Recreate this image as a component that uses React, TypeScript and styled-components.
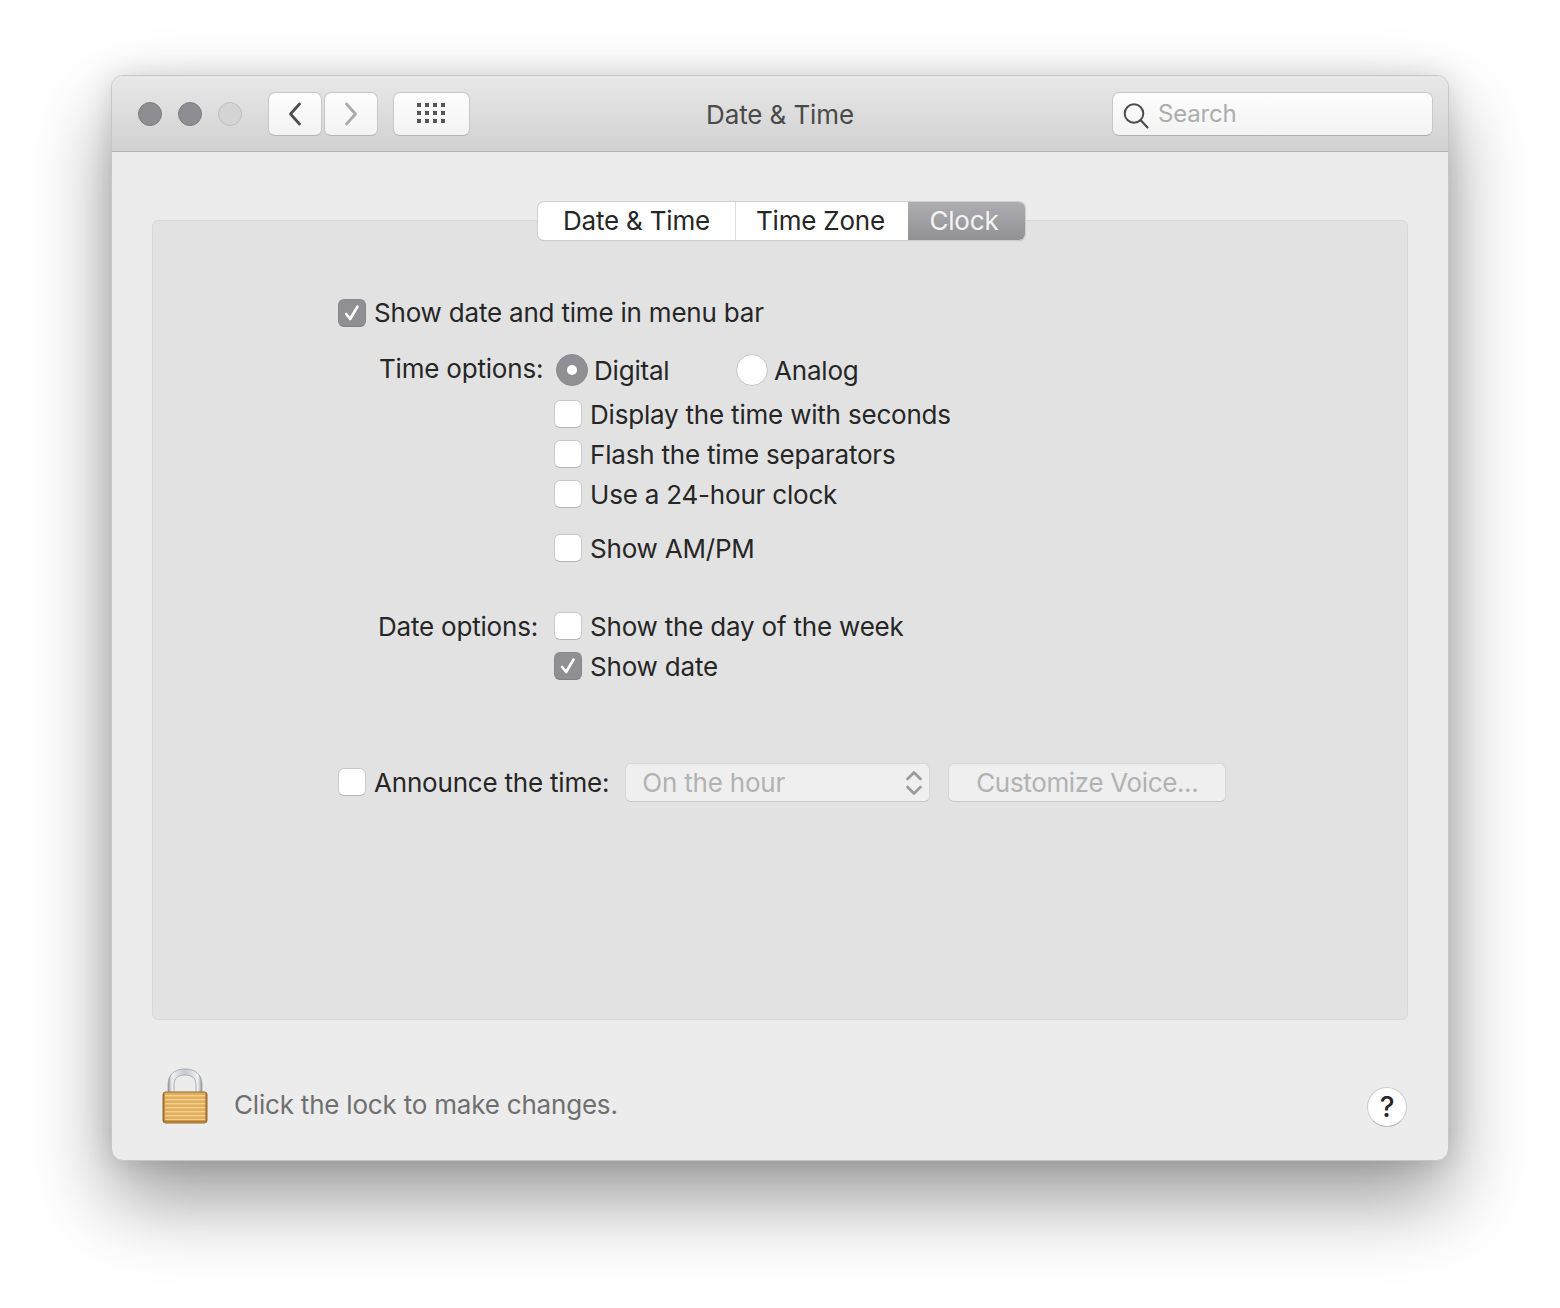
/**
 * Date & Time preference pane, Clock tab
 */
import styled, { createGlobalStyle } from 'styled-components';

const GlobalStyle = createGlobalStyle`
  html, body {
    margin: 0;
    padding: 0;
    background: #fff;
  }
  body {
    font-family: 'Inter', 'Liberation Sans', sans-serif;
    font-size: 26px;
    letter-spacing: -0.2px;
    color: #262626;
  }
`;

const Page = styled.div`
  width: 1560px;
  height: 1308px;
  padding: 75px 111px 147px;
  box-sizing: border-box;
  overflow: hidden;
`;

const Window = styled.div`
  height: 100%;
  display: flex;
  flex-direction: column;
  box-sizing: border-box;
  background: #ececec;
  border: 1px solid #c6c6c6;
  border-radius: 12px;
  overflow: hidden;
  box-shadow: 0 38px 80px rgba(0, 0, 0, 0.4), 0 0 28px rgba(0, 0, 0, 0.12);
`;

const TitleBar = styled.div`
  height: 76px;
  flex-shrink: 0;
  box-sizing: border-box;
  display: grid;
  grid-template-columns: 1fr auto 1fr;
  align-items: center;
  padding: 0 15px;
  background: linear-gradient(#e8e8e8, #d1d1d1);
  border-bottom: 1px solid #b4b4b4;
`;

const ToolGroup = styled.div`
  display: flex;
  align-items: center;
  padding-left: 11px;
`;

const Light = styled.span<{ $off?: boolean }>`
  width: 24px;
  height: 24px;
  box-sizing: border-box;
  border-radius: 50%;
  margin-right: 16px;
  background: ${(p) => (p.$off ? '#d4d4d4' : '#8e8d92')};
  border: 1px solid ${(p) => (p.$off ? '#c0c0c0' : '#7c7b80')};
`;

const ToolButton = styled.div<{ $width: number; $gap?: number }>`
  width: ${(p) => p.$width}px;
  height: 44px;
  box-sizing: border-box;
  margin-left: ${(p) => p.$gap ?? 0}px;
  display: flex;
  align-items: center;
  justify-content: center;
  background: linear-gradient(#fdfdfd, #f3f3f3);
  border: 1px solid #c8c8c8;
  border-bottom-color: #b4b4b4;
  border-radius: 7px;
`;

const WindowTitle = styled.div`
  font-size: 26px;
  letter-spacing: -0.1px;
  color: #4a4a4a;
  margin-top: 2px;
`;

const SearchField = styled.div`
  justify-self: end;
  width: 321px;
  height: 44px;
  box-sizing: border-box;
  display: flex;
  align-items: center;
  gap: 9px;
  padding-left: 10px;
  background: linear-gradient(#fdfdfd, #f3f3f3);
  border: 1px solid #c8c8c8;
  border-bottom-color: #b0b0b0;
  border-radius: 7px;
  color: #adadad;
  font-size: 24px;
`;

const Content = styled.div`
  flex: 1;
  display: flex;
  flex-direction: column;
  padding: 68px 40px 0;
`;

const Panel = styled.div`
  height: 800px;
  flex-shrink: 0;
  box-sizing: border-box;
  display: flex;
  flex-direction: column;
  background: #e2e2e2;
  border: 1px solid #d8d8d8;
  border-radius: 6px;
`;

const Tabs = styled.div`
  align-self: center;
  display: flex;
  height: 38px;
  margin: -19px 0 0 3px;
  background: #fff;
  border-radius: 6px;
  overflow: hidden;
  box-shadow: 0 0 0 1px #cfcfcf, 0 1px 1px 0 #a8a8a8;
`;

const Tab = styled.div<{ $width: number; $active?: boolean; $split?: boolean }>`
  width: ${(p) => p.$width}px;
  box-sizing: border-box;
  display: flex;
  align-items: center;
  justify-content: center;
  padding: 0 ${(p) => (p.$active ? 5 : p.$split ? 3 : 0)}px 2px 0;
  color: ${(p) => (p.$active ? '#f4f4f4' : '#262626')};
  background: ${(p) => (p.$active ? 'linear-gradient(#aeadb2, #919095)' : 'transparent')};
  border-left: ${(p) => (p.$split ? '1px solid #dcdcdc' : '0')};
`;

const Options = styled.div`
  display: flex;
  flex-direction: column;
  padding: 53px 0 0 185px;
`;

const Row = styled.div<{ $top?: number; $indent?: number }>`
  height: 40px;
  display: flex;
  align-items: center;
  margin-top: ${(p) => p.$top ?? 0}px;
  margin-left: ${(p) => p.$indent ?? 0}px;
`;

const OptionLabel = styled.div<{ $width?: number; $lift?: number }>`
  width: ${(p) => (p.$width ? `${p.$width}px` : 'auto')};
  white-space: nowrap;
  margin-bottom: ${(p) => p.$lift ?? 0}px;
`;

const Box = styled.span<{ $checked?: boolean }>`
  width: 28px;
  height: 28px;
  flex-shrink: 0;
  box-sizing: border-box;
  margin-right: 8px;
  display: flex;
  align-items: center;
  justify-content: center;
  border-radius: 6px;
  background: ${(p) => (p.$checked ? '#908f94' : '#fff')};
  border: 1px solid ${(p) => (p.$checked ? '#8a898e' : '#c9c9c9')};
  border-bottom-color: ${(p) => (p.$checked ? '#807f84' : '#b5b5b5')};
`;

const Radio = styled.span<{ $on?: boolean }>`
  width: 32px;
  height: 32px;
  flex-shrink: 0;
  box-sizing: border-box;
  margin: 0 6px 0 2px;
  display: flex;
  align-items: center;
  justify-content: center;
  border-radius: 50%;
  background: ${(p) => (p.$on ? '#908f94' : '#fff')};
  border: 1px solid ${(p) => (p.$on ? '#8a898e' : '#c4c4c4')};
`;

const RadioDot = styled.span`
  width: 10px;
  height: 10px;
  border-radius: 50%;
  background: #fff;
`;

const RadioText = styled.span<{ $width?: number }>`
  width: ${(p) => (p.$width ? `${p.$width}px` : 'auto')};
  margin-top: 1px;
  white-space: nowrap;
`;

const SelectBox = styled.div`
  width: 305px;
  height: 39px;
  box-sizing: border-box;
  margin: 1px 0 0 16px;
  padding: 0 6px 0 16px;
  display: flex;
  align-items: center;
  justify-content: space-between;
  background: #efefef;
  border: 1px solid #d6d6d6;
  border-bottom-color: #c8c8c8;
  border-radius: 6px;
  color: #b2b2b2;
`;

const DisabledButton = styled.div`
  width: 278px;
  height: 39px;
  box-sizing: border-box;
  margin: 1px 0 0 18px;
  display: flex;
  align-items: center;
  justify-content: center;
  background: #efefef;
  border: 1px solid #d6d6d6;
  border-bottom-color: #c8c8c8;
  border-radius: 6px;
  letter-spacing: -0.35px;
  color: #b2b2b2;
`;

const Footer = styled.div`
  flex: 1;
  display: flex;
  align-items: center;
  padding: 30px 0 0 10px;
`;

const LockFrame = styled.div`
  display: flex;
  margin-bottom: 18px;
`;

const LockNote = styled.div`
  margin: 0 0 2px 26px;
  color: #6f6f6f;
`;

const HelpButton = styled.div`
  width: 40px;
  height: 40px;
  box-sizing: border-box;
  margin: 4px 1px 0 auto;
  display: flex;
  align-items: center;
  justify-content: center;
  border-radius: 50%;
  background: #fff;
  border: 1px solid #cdcdcd;
  border-bottom-color: #b8b8b8;
  font-size: 28px;
  font-weight: 500;
`;

const Check = () => (
  <svg width="20" height="20" viewBox="0 0 20 20" fill="none">
    <path d="M4.2 11 L8.2 16 L15.5 3.5" stroke="#fff" strokeWidth="2.6" strokeLinecap="round" strokeLinejoin="round" />
  </svg>
);

const CheckRow = ({ label, checked, top, indent, lift }: { label: string; checked?: boolean; top?: number; indent?: number; lift?: number }) => (
  <Row $top={top} $indent={indent}>
    <Box $checked={checked}>{checked && <Check />}</Box>
    <OptionLabel $lift={lift}>{label}</OptionLabel>
  </Row>
);

const Chevron = ({ d, color }: { d: string; color: string }) => (
  <svg width="16" height="26" viewBox="0 0 16 26" fill="none">
    <path d={d} stroke={color} strokeWidth="2.8" strokeLinecap="round" strokeLinejoin="round" />
  </svg>
);

const GridDots = () => (
  <svg width="30" height="22" viewBox="0 0 30 22" fill="#565656">
    {[0, 1, 2].map((r) =>
      [0, 1, 2, 3].map((c) => <rect key={`${r}-${c}`} x={c * 8} y={r * 8} width="4" height="4" />),
    )}
  </svg>
);

const SearchIcon = () => (
  <svg width="26" height="30" viewBox="0 0 26 30" fill="none" stroke="#4c4c4c">
    <circle cx="11" cy="14.5" r="9.3" strokeWidth="2" />
    <path d="M17.5 21 L24.5 28.5" strokeWidth="2.2" strokeLinecap="round" />
  </svg>
);

const UpDown = () => (
  <svg width="18" height="28" viewBox="0 0 18 28" fill="none" stroke="#9a9a9a" strokeWidth="2.6" strokeLinecap="round" strokeLinejoin="round">
    <path d="M2.5 10 L9 3.5 L15.5 10" />
    <path d="M2.5 18 L9 24.5 L15.5 18" />
  </svg>
);

const Lock = () => (
  <svg width="46" height="56" viewBox="0 0 46 56" fill="none">
    <defs>
      <linearGradient id="shackle" x1="0" x2="1" y1="0" y2="0">
        <stop offset="0" stopColor="#8f959b" />
        <stop offset="0.12" stopColor="#eef1f4" />
        <stop offset="0.5" stopColor="#c4cad0" />
        <stop offset="0.88" stopColor="#eef1f4" />
        <stop offset="1" stopColor="#8f959b" />
      </linearGradient>
      <linearGradient id="lockBody" x1="0" x2="1" y1="0" y2="0">
        <stop offset="0" stopColor="#9d6a28" />
        <stop offset="0.06" stopColor="#e2ad5c" />
        <stop offset="0.94" stopColor="#e2ad5c" />
        <stop offset="1" stopColor="#9d6a28" />
      </linearGradient>
    </defs>
    <path d="M6 25 V17 C6 6 13 1 23 1 C33 1 40 6 40 17 V25 H34 V17 C34 10 30 7 23 7 C16 7 12 10 12 17 V25 Z" fill="url(#shackle)" stroke="#8f959b" strokeWidth="0.7" />
    <rect x="1" y="24" width="44" height="31" rx="2.5" fill="url(#lockBody)" stroke="#976a2c" strokeWidth="1" />
    {[0, 1, 2, 3, 4, 5, 6].map((i) => (
      <rect key={i} x="3" y={27 + i * 4} width="40" height="1.4" fill="#f3d08e" />
    ))}
    <rect x="1.5" y="52.5" width="43" height="2" rx="1" fill="#b07a30" />
  </svg>
);

export default function App() {
  return (
    <Page>
      <GlobalStyle />
      <Window>
        <TitleBar>
          <ToolGroup>
            <Light />
            <Light />
            <Light $off />
            <ToolButton $width={54} $gap={10}>
              <Chevron d="M12.5 3 L3.5 13 L12.5 23" color="#4e4e4e" />
            </ToolButton>
            <ToolButton $width={54} $gap={2}>
              <Chevron d="M3.5 3 L12.5 13 L3.5 23" color="#ababab" />
            </ToolButton>
            <ToolButton $width={77} $gap={15}>
              <GridDots />
            </ToolButton>
          </ToolGroup>
          <WindowTitle>Date &amp; Time</WindowTitle>
          <SearchField>
            <SearchIcon />
            Search
          </SearchField>
        </TitleBar>
        <Content>
          <Panel>
            <Tabs>
              <Tab $width={197}>Date &amp; Time</Tab>
              <Tab $width={173} $split>
                Time Zone
              </Tab>
              <Tab $width={117} $active>
                Clock
              </Tab>
            </Tabs>
            <Options>
              <CheckRow label="Show date and time in menu bar" checked lift={2} />
              <Row $top={17} $indent={41}>
                <OptionLabel $width={175} $lift={4}>
                  Time options:
                </OptionLabel>
                <Radio $on>
                  <RadioDot />
                </Radio>
                <RadioText $width={140}>Digital</RadioText>
                <Radio />
                <RadioText>Analog</RadioText>
              </Row>
              <CheckRow label="Display the time with seconds" top={4} indent={216} />
              <CheckRow label="Flash the time separators" indent={216} />
              <CheckRow label="Use a 24-hour clock" indent={216} />
              <CheckRow label="Show AM/PM" top={14} indent={216} />
              <Row $top={38} $indent={40}>
                <OptionLabel $width={176}>Date options:</OptionLabel>
                <Box />
                <OptionLabel>Show the day of the week</OptionLabel>
              </Row>
              <CheckRow label="Show date" checked indent={216} />
              <Row $top={76}>
                <Box />
                <OptionLabel>Announce the time:</OptionLabel>
                <SelectBox>
                  On the hour
                  <UpDown />
                </SelectBox>
                <DisabledButton>Customize Voice...</DisabledButton>
              </Row>
            </Options>
          </Panel>
          <Footer>
            <LockFrame>
              <Lock />
            </LockFrame>
            <LockNote>Click the lock to make changes.</LockNote>
            <HelpButton>?</HelpButton>
          </Footer>
        </Content>
      </Window>
    </Page>
  );
}
